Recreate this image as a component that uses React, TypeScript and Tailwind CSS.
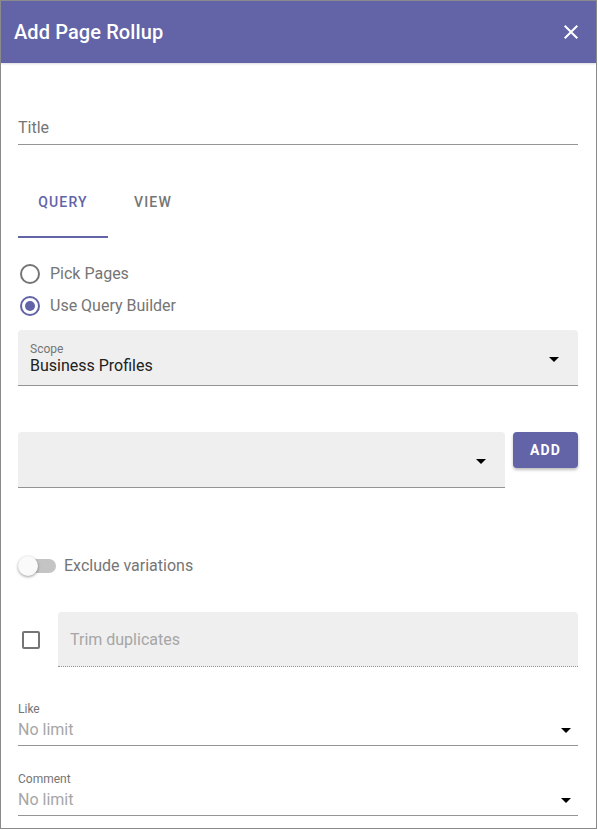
import React from "react";

const Arrow = ({ className = "" }: { className?: string }) => (
  <svg width="24" height="24" viewBox="0 0 24 24" className={className}>
    <path d="M7 10l5 5 5-5z" fill="#000" />
  </svg>
);

export default function App() {
  return (
    <div
      className="w-[597px] h-[829px] border border-[#8a8a8a] bg-white overflow-hidden"
      style={{ fontFamily: "Roboto, 'Liberation Sans', sans-serif" }}
    >
      {/* Header */}
      <div className="h-[62px] bg-[#6264a7] flex items-center justify-between pl-[13px] pr-[13px] shadow-[0_1px_2px_rgba(0,0,0,0.15)]">
        <div className="text-white text-[20px] font-medium leading-none tracking-[0.1px]">Add Page Rollup</div>
        <svg width="24" height="24" viewBox="0 0 24 24">
          <path
            d="M19 6.41L17.59 5 12 10.59 6.41 5 5 6.41 10.59 12 5 17.59 6.41 19 12 13.41 17.59 19 19 17.59 13.41 12z"
            fill="#fff"
          />
        </svg>
      </div>

      <div className="pl-[17px] pr-[18px] flex flex-col">
        {/* Title */}
        <div className="pt-[53px] pb-[4px] border-b border-[#949494]">
          <div className="text-[16px] leading-6 text-[#757575]">Title</div>
        </div>

        {/* Tabs */}
        <div className="mt-[21px] h-[72px] flex">
          <div className="relative w-[90px] h-full flex items-center justify-center text-[14px] font-medium tracking-[1.2px] text-[#6264a7]">
            QUERY
            <div className="absolute left-0 right-0 bottom-0 h-[2px] bg-[#6264a7]" />
          </div>
          <div className="w-[90px] h-full flex items-center justify-center text-[14px] font-medium tracking-[1.2px] text-[#757575]">
            VIEW
          </div>
        </div>

        {/* Radios */}
        <div className="mt-[20px] flex flex-col">
          <div className="h-[32px] flex items-center">
            <div className="ml-[2px] w-[20px] h-[20px] rounded-full border-2 border-[#757575]" />
            <div className="ml-[10px] text-[16px] text-[#757575]">Pick Pages</div>
          </div>
          <div className="h-[32px] flex items-center">
            <div className="ml-[2px] w-[20px] h-[20px] rounded-full border-2 border-[#6264a7] flex items-center justify-center">
              <div className="w-[10px] h-[10px] rounded-full bg-[#6264a7]" />
            </div>
            <div className="ml-[10px] text-[16px] text-[#757575]">Use Query Builder</div>
          </div>
        </div>

        {/* Scope */}
        <div className="relative mt-[8px] h-[56px] bg-[#efefef] rounded-t-[4px] border-b border-[#949494] pl-[12px] pt-[12px]">
          <div className="text-[12px] leading-[14px] text-[#757575]">Scope</div>
          <div className="text-[16px] leading-[20px] text-[#212121]">Business Profiles</div>
          <Arrow className="absolute right-[12px] top-[17px]" />
        </div>

        {/* Select + ADD */}
        <div className="mt-[46px] flex items-start gap-[8px]">
          <div className="relative w-[487px] h-[56px] bg-[#efefef] rounded-t-[4px] border-b border-[#949494]">
            <Arrow className="absolute right-[12px] top-[17px]" />
          </div>
          <div className="w-[65px] h-[36px] rounded-[4px] bg-[#6264a7] text-white text-[14px] font-bold tracking-[1.2px] flex items-center justify-center shadow-[0_2px_3px_rgba(0,0,0,0.25)]">
            ADD
          </div>
        </div>

        {/* Switch */}
        <div className="mt-[58px] h-[38px] flex items-center pt-[2px]">
          <div className="relative w-[40px] h-[20px] flex items-center">
            <div className="absolute left-[4px] w-[34px] h-[14px] rounded-full bg-[#c4c4c4]" />
            <div className="absolute left-0 w-[20px] h-[20px] rounded-full bg-[#fafafa] shadow-[0_1px_3px_rgba(0,0,0,0.4)]" />
          </div>
          <div className="ml-[6px] text-[16px] text-[#757575]">Exclude variations</div>
        </div>

        {/* Checkbox + Trim duplicates */}
        <div className="mt-[28px] flex items-center">
          <div className="ml-[4px] w-[18px] h-[18px] rounded-[2px] border-2 border-[#757575]" />
          <div className="ml-[18px] flex-1 h-[55px] bg-[#efefef] rounded-t-[4px] border-b border-dotted border-[#949494] flex items-center pl-[12px] pt-[2px]">
            <div className="text-[16px] text-[#a6a6a6]">Trim duplicates</div>
          </div>
        </div>

        {/* Like */}
        <div className="relative mt-[33px] border-b border-[#949494] pt-[1px]">
          <div className="text-[12px] leading-[16px] text-[#757575]">Like</div>
          <div className="text-[16px] leading-[24px] pt-[1px] pb-[3px] text-[#a6a6a6]">No limit</div>
          <Arrow className="absolute right-0 top-[18px]" />
        </div>

        {/* Comment */}
        <div className="relative mt-[24px] border-b border-[#949494] pt-[1px]">
          <div className="text-[12px] leading-[16px] text-[#757575]">Comment</div>
          <div className="text-[16px] leading-[24px] pt-[1px] pb-[3px] text-[#a6a6a6]">No limit</div>
          <Arrow className="absolute right-0 top-[18px]" />
        </div>
      </div>
    </div>
  );
}
